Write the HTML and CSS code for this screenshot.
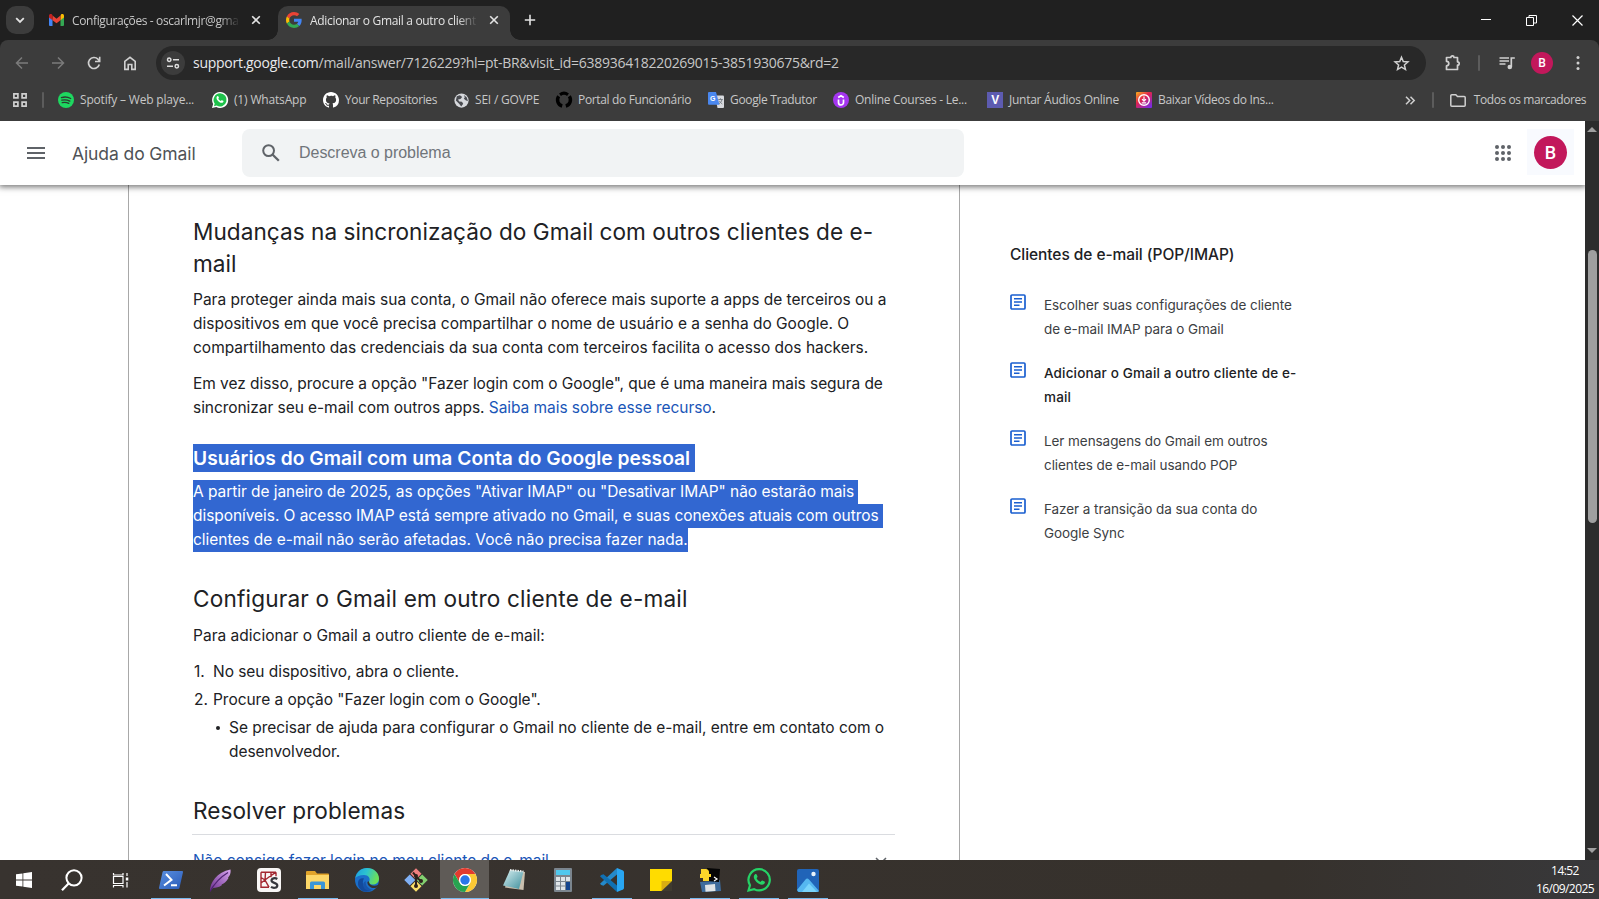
FILE: index.html
```html
<!DOCTYPE html>
<html lang="pt-BR">
<head>
<meta charset="utf-8">
<title>Adicionar o Gmail a outro cliente de e-mail</title>
<link rel="stylesheet" href="styles.css">
</head>
<body>
<svg width="0" height="0" class="defs">
  <defs>
    <symbol id="doc" viewBox="0 0 16 16"><rect x="1" y="1" width="14" height="14" rx="1" fill="none" stroke="#1a5fd0" stroke-width="1.7"/><path d="M4 4.8h8M4 8h8M4 11.200h5.500" stroke="#1a5fd0" stroke-width="1.500"/></symbol>
    <symbol id="x" viewBox="0 0 10 10"><path d="M1.200 1.200l7.600 7.600M8.800 1.200L1.200 8.800" stroke="#e3e3e3" stroke-width="1.600"/></symbol>
    <linearGradient id="edge" x1="0" y1="0" x2="1" y2="0.300"><stop offset="0" stop-color="#1c9de0"/><stop offset="0.500" stop-color="#2cc3d0"/><stop offset="1" stop-color="#6be05a"/></linearGradient>
    <linearGradient id="insta" x1="0" y1="0" x2="0.800" y2="1"><stop offset="0" stop-color="#fbb41a"/><stop offset="0.450" stop-color="#e0234e"/><stop offset="1" stop-color="#7b2be0"/></linearGradient>
    <linearGradient id="feather" x1="0" y1="1" x2="1" y2="0"><stop offset="0" stop-color="#6a2e8c"/><stop offset="1" stop-color="#d9a6f0"/></linearGradient>
    <linearGradient id="note" x1="0" y1="0" x2="1" y2="1"><stop offset="0" stop-color="#d8f0f2"/><stop offset="1" stop-color="#3f8f9c"/></linearGradient>
    <linearGradient id="ps" x1="0" y1="0" x2="1" y2="1"><stop offset="0" stop-color="#5a8fe0"/><stop offset="1" stop-color="#2a5bb8"/></linearGradient>
  </defs>
</svg>

<header class="tabstrip">
  <div class="tabsearch"><svg width="10" height="7" viewBox="0 0 10 7"><path d="M1.200 1.200L5 5l3.800-3.800" fill="none" stroke="#e3e3e3" stroke-width="1.800"/></svg></div>
  <div class="tab">
    <svg width="15" height="12" viewBox="0 0 15 12"><path d="M0 1.500V11a1 1 0 0 0 1 1h2.500V5z" fill="#4285f4"/><path d="M15 1.500V11a1 1 0 0 1-1 1h-2.500V5z" fill="#34a853"/><path d="M11.500 2v4.200L15 3.500V1.800C15 .2 13.200-.4 12 .6z" fill="#fbbc04"/><path d="M3.500 6.200V1.600l4 3.100 4-3.100v4.600l-4 3.100z" fill="#ea4335"/><path d="M0 1.800v1.700l3.500 2.700V1.600L3 .6C1.800-.4 0 .2 0 1.800z" fill="#c5221f"/></svg>
    <span class="tabtitle">Configurações - oscarlmjr@gma</span>
    <svg class="close" width="10" height="10"><use href="#x"/></svg>
  </div>
  <div class="tab active">
    <svg width="16" height="16" viewBox="0 0 48 48"><path fill="#EA4335" d="M24 9.500c3.540 0 6.710 1.220 9.210 3.600l6.850-6.850C35.900 2.380 30.470 0 24 0 14.620 0 6.510 5.380 2.560 13.220l7.980 6.190C12.430 13.720 17.740 9.500 24 9.500z"/><path fill="#4285F4" d="M46.980 24.550c0-1.570-.15-3.090-.38-4.550H24v9.020h12.940c-.58 2.960-2.260 5.480-4.780 7.180l7.730 6c4.510-4.180 7.090-10.360 7.090-17.650z"/><path fill="#FBBC05" d="M10.530 28.590c-.48-1.450-.76-2.990-.76-4.590s.27-3.140.76-4.590l-7.980-6.190C.92 16.460 0 20.120 0 24c0 3.880.92 7.540 2.560 10.780l7.970-6.190z"/><path fill="#34A853" d="M24 48c6.480 0 11.930-2.130 15.890-5.810l-7.730-6c-2.150 1.450-4.920 2.300-8.160 2.300-6.260 0-11.570-4.220-13.470-9.910l-7.980 6.190C6.510 42.620 14.620 48 24 48z"/></svg>
    <span class="tabtitle">Adicionar o Gmail a outro client</span>
    <svg class="close" width="10" height="10"><use href="#x"/></svg>
  </div>
  <svg class="newtab" width="12" height="12" viewBox="0 0 12 12"><path d="M6 .8v10.400M.8 6h10.400" stroke="#e3e3e3" stroke-width="1.600"/></svg>
  <div class="winbtns">
    <svg width="10" height="10" viewBox="0 0 10 10"><path d="M0 4.500h10" stroke="#fff"/></svg>
    <svg width="11" height="11" viewBox="0 0 11 11"><path d="M.5 2.500h7v8h-7zM3 2.500v-2h7.500v7.500H7.500" fill="none" stroke="#fff"/></svg>
    <svg width="11" height="11" viewBox="0 0 11 11"><path d="M.5.5l10 10M10.500.5l-10 10" stroke="#fff" stroke-width="1.200"/></svg>
  </div>
</header>

<div class="toolbar">
  <div class="nav">
    <svg width="16" height="16" viewBox="0 0 16 16"><path d="M14 8H3M8 2.500L2.500 8 8 13.500" fill="none" stroke="#7b7b7b" stroke-width="1.500"/></svg>
    <svg width="16" height="16" viewBox="0 0 16 16"><path d="M2 8h11M8 2.500L13.500 8 8 13.500" fill="none" stroke="#7b7b7b" stroke-width="1.500"/></svg>
    <svg width="16" height="16" viewBox="0 0 16 16"><path d="M13.300 9.500A5.500 5.500 0 1 1 12 4.200L13.200 5.600" fill="none" stroke="#d0d0d0" stroke-width="1.700"/><path d="M13.700 1.800v4.700H9" fill="none" stroke="#d0d0d0" stroke-width="1.600"/></svg>
    <svg width="16" height="16" viewBox="0 0 16 16"><path d="M2.800 6.300L8 2.300l5.200 4v8.100H9.800V9.500H6.200v4.900H2.800z" fill="none" stroke="#d0d0d0" stroke-width="1.600"/></svg>
  </div>
  <div class="omnibox">
    <span class="siteinfo"><svg width="14" height="14" viewBox="0 0 14 14" fill="none" stroke="#dedede" stroke-width="1.500"><circle cx="3.200" cy="3.700" r="1.700"/><path d="M7 3.700h6M1 10.300h6"/><circle cx="10.800" cy="10.300" r="1.700"/></svg></span>
    <span class="url"><b>support.google.com</b>/mail/answer/7126229?hl=pt-BR&amp;visit_id=638936418220269015-3851930675&amp;rd=2</span>
    <svg width="17" height="17" viewBox="0 0 24 24"><path d="M12 3.200l2.500 6.100 6.600.5-5 4.300 1.500 6.400L12 17l-5.600 3.500 1.500-6.400-5-4.300 6.600-.5z" fill="none" stroke="#d0d0d0" stroke-width="2.100"/></svg>
  </div>
  <div class="tools">
    <svg width="18" height="18" viewBox="0 0 18 18"><path d="M2.500 3.500h4.300a1.600 1.600 0 0 1 3.200 0h3.500v4.300a1.700 1.700 0 0 1 0 3.400v4.300h-11v-3.600a2.200 2.200 0 0 0 0-4.600z" fill="none" stroke="#d0d0d0" stroke-width="1.700" stroke-linejoin="round"/></svg>
    <i class="sep"></i>
    <svg class="music" width="16" height="14" viewBox="0 0 16 14"><path d="M.5 2h9.500M.5 5h9.500M.5 8h6" stroke="#d0d0d0" stroke-width="1.500"/><path d="M12.300 11V2h3.500" fill="none" stroke="#d0d0d0" stroke-width="1.700"/><circle cx="10.800" cy="11" r="2.300" fill="#d0d0d0"/></svg>
    <span class="avatar small">B</span>
    <svg class="kebab" width="4" height="16" viewBox="0 0 4 16" fill="#d0d0d0"><circle cx="2" cy="2.500" r="1.500"/><circle cx="2" cy="8" r="1.500"/><circle cx="2" cy="13.500" r="1.500"/></svg>
  </div>
</div>

<div class="bookmarks">
  <svg class="grid" width="14" height="14" viewBox="0 0 14 14" fill="none" stroke="#d0d0d0" stroke-width="1.700"><path d="M.9.900h4v4h-4zM9.100.9h4v4h-4zM.9 9.100h4v4h-4zM9.100 9.100h4v4h-4z"/></svg>
  <i class="sep"></i>
  <div class="bm b1"><svg width="16" height="16" viewBox="0 0 16 16"><circle cx="8" cy="8" r="8" fill="#1ed760"/><path d="M3.400 5.600c3-.9 6.600-.6 9.300.9M3.800 8.200c2.700-.7 5.600-.4 8 .9M4.200 10.600c2.300-.5 4.700-.3 6.600.8" fill="none" stroke="#2c3a30" stroke-width="1.300" stroke-linecap="round"/></svg>Spotify – Web playe...</div>
  <div class="bm b2"><svg width="16" height="16" viewBox="0 0 16 16"><path d="M8 0a8 8 0 1 1-3.700 15L0 16l1.100-4.100A8 8 0 0 1 8 0z" fill="#fff"/><path d="M8 1.300a6.600 6.600 0 1 1-3.300 12.300L2 14.200l.7-2.600A6.600 6.600 0 0 1 8 1.300z" fill="#1fc14b"/><path d="M5.300 4.300c.6-.4 1-.2 1.200.4l.4 1c.1.400-.5.800-.6 1.100.5 1 1.400 1.800 2.400 2.200.4-.2.800-1 1.200-.8l1.300.6c.5.300.3 1-.1 1.400-.9.900-2.300.7-3.500 0a7.500 7.500 0 0 1-2.700-2.800c-.6-1.200-.5-2.400.4-3.100z" fill="#fff"/></svg>(1) WhatsApp</div>
  <div class="bm b3"><svg width="16" height="16" viewBox="0 0 16 16"><path fill="#fff" d="M8 0C3.580 0 0 3.580 0 8c0 3.540 2.290 6.530 5.470 7.590.4.070.55-.17.55-.38 0-.19-.01-.82-.01-1.490-2.010.37-2.530-.49-2.690-.94-.09-.23-.48-.94-.82-1.130-.28-.15-.68-.52-.01-.53.63-.01 1.080.58 1.230.82.720 1.210 1.870.87 2.330.66.070-.52.280-.87.510-1.070-1.780-.2-3.640-.89-3.640-3.950 0-.87.310-1.590.82-2.150-.08-.2-.36-1.020.08-2.120 0 0 .67-.21 2.200.82A7.600 7.600 0 0 1 8 3.870c.68 0 1.360.09 2 .27 1.530-1.040 2.200-.82 2.200-.82.440 1.100.16 1.920.08 2.120.51.560.82 1.270.82 2.150 0 3.070-1.870 3.750-3.650 3.950.29.250.54.730.54 1.480 0 1.070-.01 1.930-.01 2.200 0 .21.150.46.550.38A8 8 0 0 0 16 8c0-4.420-3.580-8-8-8z"/></svg>Your Repositories</div>
  <div class="bm b4"><svg width="15" height="15" viewBox="0 0 16 16"><circle cx="8" cy="8" r="7.600" fill="#d6d8dc"/><path d="M3 3.500l3.300-1 2.400 1.800-1.800 2-2.600.6L5.500 9l3 .4 1.300 2-2.100 3-2-2.600L2 8zM10.500 2l3 2.600 1.400 3.800-2.100-.4-2.300-2 1-1.400z" fill="#494b50"/></svg>SEI / GOVPE</div>
  <div class="bm b5"><svg width="16" height="16" viewBox="0 0 16 16"><g fill="none" stroke="#000" stroke-width="3.400"><path d="M2.700 4.300A6.300 6.300 0 0 0 6.200 14M13.300 4.300A6.300 6.300 0 0 1 9.800 14"/><path d="M4 2.700a6.500 6.500 0 0 1 8 0" stroke-width="3"/></g></svg>Portal do Funcionário</div>
  <div class="bm b6"><svg width="16" height="16" viewBox="0 0 16 16"><path d="M7 3.500h8a1 1 0 0 1 1 1V15a1 1 0 0 1-1 1H9.500z" fill="#d8dade"/><path d="M1 0h7l3.500 12.800H1a1 1 0 0 1-1-1V1a1 1 0 0 1 1-1z" fill="#4a87ee"/><path d="M10.300 7.500h4.500M12.500 6.300v1.200M14 7.700c-.6 2-1.600 3-3 4M11.300 9.300l3 2.700" stroke="#7a8087" fill="none"/><text x="2" y="9.300" class="g">G</text></svg>Google Tradutor</div>
  <div class="bm b7"><svg width="16" height="16" viewBox="0 0 16 16"><circle cx="8" cy="8" r="8" fill="#a435f0"/><path d="M5.500 7.500v3a2.500 2.500 0 0 0 5 0v-3M5.200 5.500L8 3.800l2.800 1.700" fill="none" stroke="#fff" stroke-width="1.700"/></svg>Online Courses - Le...</div>
  <div class="bm b8"><span class="vico">V</span>Juntar Áudios Online</div>
  <div class="bm b9"><svg width="16" height="16" viewBox="0 0 16 16"><rect width="16" height="16" rx="1" fill="url(#insta)"/><circle cx="8" cy="8" r="5.300" fill="none" stroke="#fff" stroke-width="1.400"/><path d="M8 4.500v4.300M6 7.200l2 2 2-2M5.800 10.800h4.400" fill="none" stroke="#fff" stroke-width="1.200"/></svg>Baixar Vídeos do Ins...</div>
  <svg class="more" width="10" height="9" viewBox="0 0 10 9"><path d="M1 .8l3.700 3.700L1 8.200M5.500.8l3.700 3.700-3.700 3.700" fill="none" stroke="#d0d0d0" stroke-width="1.500"/></svg>
  <i class="sep"></i>
  <div class="bm all"><svg width="16" height="13" viewBox="0 0 16 13"><path d="M.8 1.800a1 1 0 0 1 1-1h4l1.700 1.800h6.700a1 1 0 0 1 1 1v7.600a1 1 0 0 1-1 1H1.800a1 1 0 0 1-1-1z" fill="none" stroke="#d0d0d0" stroke-width="1.500"/></svg>Todos os marcadores</div>
</div>

<div class="viewport">
  <div class="page">
    <div class="helpbar">
      <svg width="18" height="12" viewBox="0 0 18 12"><path d="M0 1h18M0 6h18M0 11h18" stroke="#5f6368" stroke-width="2"/></svg>
      <span class="product">Ajuda do Gmail</span>
      <div class="search">
        <svg width="18" height="18" viewBox="0 0 18 18" fill="none" stroke="#5f6368"><circle cx="6.600" cy="6.600" r="5.400" stroke-width="2"/><path d="M10.500 10.500l6.300 6.300" stroke-width="2.300"/></svg>
        <span>Descreva o problema</span>
      </div>
      <svg class="apps" width="16" height="16" viewBox="0 0 16 16" fill="#5f6368"><circle cx="2" cy="2" r="2"/><circle cx="8" cy="2" r="2"/><circle cx="14" cy="2" r="2"/><circle cx="2" cy="8" r="2"/><circle cx="8" cy="8" r="2"/><circle cx="14" cy="8" r="2"/><circle cx="2" cy="14" r="2"/><circle cx="8" cy="14" r="2"/><circle cx="14" cy="14" r="2"/></svg>
      <div class="account"><span class="avatar">B</span></div>
    </div>
    <div class="content">
      <article>
        <h2>Mudanças na sincronização do Gmail com outros clientes de e-<br>mail</h2>
        <p>Para proteger ainda mais sua conta, o Gmail não oferece mais suporte a apps de terceiros ou a<br>dispositivos em que você precisa compartilhar o nome de usuário e a senha do Google. O<br>compartilhamento das credenciais da sua conta com terceiros facilita o acesso dos hackers.</p>
        <p class="tight">Em vez disso, procure a opção "Fazer login com o Google", que é uma maneira mais segura de<br>sincronizar seu e-mail com outros apps. <a>Saiba mais sobre esse recurso</a>.</p>
        <h3><span class="sel">Usuários do Gmail com uma Conta do Google pessoal</span></h3>
        <p class="tight selected"><span class="sel">A partir de janeiro de 2025, as opções "Ativar IMAP" ou "Desativar IMAP" não estarão mais</span><span class="sel">disponíveis. O acesso IMAP está sempre ativado no Gmail, e suas conexões atuais com outros</span><span class="sel last">clientes de e-mail não serão afetadas. Você não precisa fazer nada.</span></p>
        <h2 class="next">Configurar o Gmail em outro cliente de e-mail</h2>
        <p>Para adicionar o Gmail a outro cliente de e-mail:</p>
        <div class="steps">
          <div class="step"><span>1.</span>No seu dispositivo, abra o cliente.</div>
          <div class="step"><span>2.</span>Procure a opção "Fazer login com o Google".</div>
          <div class="sub"><i></i><div>Se precisar de ajuda para configurar o Gmail no cliente de e-mail, entre em contato com o<br>desenvolvedor.</div></div>
        </div>
        <h2 class="trouble">Resolver problemas</h2>
        <div class="faq"><a>Não consigo fazer login no meu cliente de e-mail</a><svg width="12" height="8" viewBox="0 0 12 8"><path d="M1 1l5 5 5-5" fill="none" stroke="#5f6368" stroke-width="1.500"/></svg></div>
      </article>
      <aside>
        <h4>Clientes de e-mail (POP/IMAP)</h4>
        <div class="rel"><svg width="16" height="16"><use href="#doc"/></svg><span>Escolher suas configurações de cliente<br>de e-mail IMAP para o Gmail</span></div>
        <div class="rel current"><svg width="16" height="16"><use href="#doc"/></svg><span>Adicionar o Gmail a outro cliente de e-<br>mail</span></div>
        <div class="rel"><svg width="16" height="16"><use href="#doc"/></svg><span>Ler mensagens do Gmail em outros<br>clientes de e-mail usando POP</span></div>
        <div class="rel"><svg width="16" height="16"><use href="#doc"/></svg><span>Fazer a transição da sua conta do<br>Google Sync</span></div>
      </aside>
    </div>
  </div>
  <div class="scrollbar"><i class="up"></i><i class="thumb"></i><i class="down"></i></div>
</div>

<footer class="taskbar">
  <div class="slot n"><svg width="16" height="16" viewBox="0 0 16 16" fill="#fff"><path d="M0 2.300l6.500-.9v6.200H0zM7.300 1.300L16 0v7.600H7.300zM0 8.400h6.500v6.200L0 13.700zM7.300 8.400H16V16l-8.700-1.300z"/></svg></div>
  <div class="slot n"><svg width="22" height="22" viewBox="0 0 22 22" fill="none" stroke="#fff"><circle cx="13" cy="8.800" r="7.600" stroke-width="2"/><path d="M7.600 14.500L1 21.300" stroke-width="2.200"/></svg></div>
  <div class="slot n"><svg width="17" height="16" viewBox="0 0 17 16" fill="none" stroke="#fff" stroke-width="1.200"><path d="M1.500 4.500h9.500v7H1.500zM1.500 1v2h9.500V1M1.500 15.500v-2h9.500v2M15 1v3M15 10v5.500"/><path d="M13.800 5.500h2.500v3h-2.500z" fill="#fff" stroke="none"/></svg></div>
  <div class="slot run"><svg width="24" height="18" viewBox="0 0 24 18"><path d="M5 0h18a1 1 0 0 1 1 1.200l-3.500 15.500a1.600 1.600 0 0 1-1.500 1.300H1a1 1 0 0 1-1-1.200L3.500 1.300A1.600 1.600 0 0 1 5 0z" fill="url(#ps)"/><path d="M7 3l5.500 5.800L5 14.500M12 14.300h6" fill="none" stroke="#fff" stroke-width="2"/></svg></div>
  <div class="slot"><svg width="22" height="23" viewBox="0 0 22 23"><path d="M1 22.500C.5 14 8 3 21.500.5c.5 4.500-1 6.500-2.500 8l.5.500c-2 4-5 5.500-7 6.500l.5.500c-3 2.500-6 2.500-9 3z" fill="url(#feather)"/><path d="M1 22.500C5 15 10 9 19 3.500" fill="none" stroke="#4f2272" stroke-width="1.200"/></svg></div>
  <div class="slot"><svg width="24" height="24" viewBox="0 0 24 24"><rect width="24" height="24" rx="4" fill="#f8f6f5"/><path d="M4 4.200h15M4 4.200v15h8M8.500 4.200l-.5 8 4 7M4 9.500l4 2.500 4-3 7-4.800M4 15l4-3M14 4.200v5M19 4.200v4" fill="none" stroke="#a32730" stroke-width="1.400"/><path d="M20.300 11c-2.300-1.500-5.800-.8-5.800 1.600 0 3 5.800 1.500 5.800 4.900 0 2.500-3.900 3-6.300 1.400" fill="none" stroke="#36363c" stroke-width="2.200"/></svg></div>
  <div class="slot run"><svg width="23" height="19" viewBox="0 0 23 19"><path d="M1 0h8l2 2.500h11a1 1 0 0 1 1 1V17H0V1a1 1 0 0 1 1-1z" fill="#e0a32a"/><path d="M0 4h23v14H0z" fill="#fcd768"/><path d="M4 18v-6a1.500 1.500 0 0 1 1.500-1.500h12A1.500 1.500 0 0 1 19 12v6h-4v-4H8v4z" fill="#3a96d8"/></svg></div>
  <div class="slot"><svg width="24" height="24" viewBox="0 0 24 24"><circle cx="12" cy="12" r="12" fill="#1b6fc9"/><path d="M.3 10C1.500 4 6 0 12 0c7 0 12 5 12 10.500 0 4-3 6-6.500 6-3 0-4-1.200-3.500-2.500 2-3.500-.5-7-5-7C4.500 7 1.500 8.500.3 10z" fill="url(#edge)"/><path d="M9 10.500c-3 4.500 0 11.500 7 12-7 3.500-13.500-1-13-8 .2-3 3-5 6-4z" fill="#124a9c"/><path d="M14 14c1 4 6 5 9.500 2.500-.5 1.300-1.300 2.300-2.200 3.200-4.300 1.200-8.300-1.200-8.900-4.700-.2-1.700 1.600-2.500 1.600-1z" fill="#37322e"/><path d="M10.800 13c-.8 4.500 3 8.600 7.500 8.600-3 2-8 1.300-9.800-2.600-1-2.500-.2-5 2.300-6z" fill="#1755ab"/></svg></div>
  <div class="slot"><svg width="24" height="24" viewBox="0 0 24 24"><g transform="rotate(45 12 12)"><rect x="3.700" y="3.700" width="7.800" height="7.800" fill="#f08080"/><rect x="12.500" y="3.700" width="7.800" height="7.800" fill="#82d070"/><rect x="3.700" y="12.500" width="7.800" height="7.800" fill="#80b0f5"/><rect x="12.500" y="12.500" width="7.800" height="7.800" fill="#fbe069"/></g><path d="M9 4.500L12 8v10M12 9l5 4" fill="none" stroke="#2d211c" stroke-width="2"/><circle cx="12" cy="8" r="2" fill="#2d211c"/><circle cx="12" cy="18" r="2" fill="#2d211c"/><circle cx="17" cy="13" r="2" fill="#2d211c"/></svg></div>
  <div class="slot run focus"><svg width="24" height="24" viewBox="0 0 24 24"><circle cx="12" cy="12" r="12" fill="#fff"/><path d="M1.600 6A12 12 0 0 1 22.400 6H12a6 6 0 0 0-5.200 9z" fill="#e33b2e"/><path d="M22.400 6A12 12 0 0 1 12 24l5.200-9A6 6 0 0 0 12 6z" fill="#fcc934"/><path d="M1.600 6A12 12 0 0 0 12 24l5.200-9a6 6 0 0 1-10.400 0z" fill="#27a350"/><circle cx="12" cy="12" r="5.900" fill="#fff"/><circle cx="12" cy="12" r="4.700" fill="#2b76e8"/></svg></div>
  <div class="slot"><svg width="24" height="22" viewBox="0 0 24 22"><path d="M8 1l15 2-1.500 18L3 18.500z" fill="#c9bfae"/><path d="M8 1l13.500 1.500L17 20 1 16.500z" fill="url(#note)"/><path d="M8 1l13.500 1.500" stroke="#e9eeee" stroke-width="2" stroke-dasharray="1.500 1"/></svg></div>
  <div class="slot"><svg width="18" height="24" viewBox="0 0 18 24"><rect width="18" height="24" rx="1" fill="#7b858e"/><rect x="2" y="2" width="14" height="5" fill="#50c8ee"/><g fill="#dfe5e9"><path d="M2 9h4v4H2zM7 9h4v4H7zM12 9h4v4h-4zM2 14h4v3.500H2zM7 14h4v3.500H7zM2 18.500h4V22H2zM7 18.500h4V22H7z"/></g><path d="M12 14h4v8h-4z" fill="#14468f"/></svg></div>
  <div class="slot run"><svg width="24" height="24" viewBox="0 0 24 24"><path d="M17 0v6.500L3.500 17.800 1.200 16.900 0 15.700z" fill="#2489ca"/><path d="M0 8.300L1.200 7.100l2.300-.9L17 17.500V24z" fill="#1070b3"/><path d="M17 0l6 2.500a2 2 0 0 1 1 1.600v15.800a2 2 0 0 1-1 1.600L17 24z" fill="#29a6f2"/></svg></div>
  <div class="slot"><svg width="22" height="22" viewBox="0 0 22 22"><path d="M0 0h22v22H0z" fill="#ffdc00"/><path d="M11.500 22V12H22z" fill="#d9ae12"/><path d="M11.500 22L22 12v10z" fill="#3f3b30"/></svg></div>
  <div class="slot run"><svg width="22" height="24" viewBox="0 0 22 24"><path d="M1 14l20-2 1 11-19 1z" fill="#3e6c9d"/><path d="M6 17l10-1 .5 7-10 .7z" fill="#dfe4e7"/><path d="M8 0l13 1-1 13-13-1z" fill="#050505"/><path d="M15 9l3 2-3 2" fill="none" stroke="#fff" stroke-width="1.200"/><path d="M2 1h5a3 3 0 0 1 3 2.500V6h2v3h-2v4H4v-3H1V6h1z" fill="#fbd62a"/></svg></div>
  <div class="slot run"><svg width="24" height="24" viewBox="0 0 24 24"><path d="M12.300 1.200a10.600 10.600 0 1 1-5.200 19.900L1.500 22.500 3 17.200a10.600 10.600 0 0 1 9.300-16z" fill="none" stroke="#25d366" stroke-width="2.200"/><path d="M8 6.300c.8-.5 1.500-.3 1.800.5l.7 1.700c.2.600-.8 1.300-.9 1.700.8 1.600 2.200 3 3.900 3.700.5-.3 1.300-1.700 1.900-1.400l2.100 1c.8.500.4 1.700-.2 2.300-1.500 1.500-3.600 1-5.500 0a12 12 0 0 1-4.400-4.600C6.400 9.200 6.600 7.400 8 6.300z" fill="#25d366"/></svg></div>
  <div class="slot run"><svg width="22" height="23" viewBox="0 0 22 23"><rect width="22" height="23" rx="2" fill="#2064b8"/><path d="M0 21L8.500 10.500a2.300 2.300 0 0 1 3.500 0L22 22a2 2 0 0 1-1.500 1H1.500z" fill="#55b7f0"/><path d="M5 23l7-8.500L20 23z" fill="#79d4fb"/><circle cx="16.500" cy="5" r="2.200" fill="#e8f3fb"/></svg></div>
  <div class="clock"><span>14:52</span><span>16/09/2025</span></div>
</footer>
</body>
</html>
```
FILE: styles.css
```css
* { box-sizing: border-box; }
html, body { margin: 0; height: 899px; overflow: hidden; }
body {
  display: flex; flex-direction: column; width: 1599px;
  font-family: Inter, "Liberation Sans", sans-serif; background: #1f1f1f;
}
svg { display: block; flex: none; overflow: visible; }
i { display: block; flex: none; }
.defs { position: absolute; }

/* tab strip */
.tabstrip {
  height: 40px; flex: none; display: flex; align-items: flex-start; padding: 6px 0 0 6px;
  background: #202020; color: #e3e3e3; font: 12px/28px "Open Sans", sans-serif;
}
.tabsearch {
  width: 28px; height: 28px; border-radius: 10px; background: #3c3c3c;
  display: flex; align-items: center; justify-content: center;
}
.tab { display: flex; align-items: center; height: 28px; width: 244px; padding-left: 15px; color: #c7c7c7; }
.tab .tabtitle {
  margin-left: 8px; padding-top: 1px; width: 168px; white-space: nowrap; letter-spacing: -0.380px;
  -webkit-mask-image: linear-gradient(90deg, #000 88%, transparent);
  mask-image: linear-gradient(90deg, #000 88%, transparent);
}
.tab .close { margin-left: 11px; }
.tab.active {
  width: 232px; height: 34px; padding: 0 0 6px 8px; background: #3c3c3c;
  border-radius: 10px 10px 0 0; color: #e3e3e3; position: relative;
}
.tab.active::before, .tab.active::after {
  content: ""; position: absolute; bottom: 0; width: 10px; height: 10px;
}
.tab.active::before { left: -10px; background: radial-gradient(circle at 0 0, transparent 9.500px, #3c3c3c 10px); }
.tab.active::after { right: -10px; background: radial-gradient(circle at 100% 0, transparent 9.500px, #3c3c3c 10px); }
.tab.active .tabtitle { letter-spacing: -0.320px; }
.newtab { margin: 8px 0 0 14px; }
.winbtns { margin-left: auto; display: flex; align-items: center; height: 28px; gap: 35px; padding-right: 16px; }

/* toolbar */
.toolbar {
  height: 46px; flex: none; display: flex; align-items: center; padding-left: 14px;
  background: #3c3c3c; border-radius: 8px 8px 0 0;
}
.nav { display: flex; gap: 20px; width: 142px; }
.omnibox {
  width: 1270px; height: 34px; border-radius: 17px; background: #282828;
  display: flex; align-items: center; padding: 0 16px 0 5px;
}
.siteinfo {
  width: 24px; height: 24px; border-radius: 50%; background: #3c3c3c;
  display: flex; align-items: center; justify-content: center;
}
.url {
  flex: 1; margin-left: 8px; color: #c7c7c7; white-space: nowrap;
  font: 14px/20px "Open Sans", sans-serif; letter-spacing: -0.270px;
}
.url b { font-weight: 400; color: #e8eaed; }
.tools { display: flex; align-items: center; margin-left: 18px; }
.sep { width: 2px; height: 16px; background: #5c5c5c; border-radius: 1px; }
.tools .sep { margin-left: 16px; }
.music { margin-left: 19px; }
.kebab { margin-left: 23px; }
.avatar {
  width: 33px; height: 33px; border-radius: 50%; background: #c2185b; color: #fff;
  display: flex; align-items: center; justify-content: center; font: 500 18px Roboto, sans-serif;
}
.avatar.small { width: 22px; height: 22px; margin-left: 16px; font-size: 12px; }

/* bookmarks bar */
.bookmarks {
  height: 35px; flex: none; display: flex; align-items: center; padding: 0 13px 7px; color: #c7c7c7;
  background: #3c3c3c; font: 12px/20px "Open Sans", sans-serif; letter-spacing: -0.340px;
}
.grid + .sep { margin: 0 14px 0 15px; }
.bm { display: flex; align-items: center; gap: 6px; white-space: nowrap; flex: none; }
.b1 { width: 154px; letter-spacing: -0.190px; }
.b2 { width: 111px; letter-spacing: -0.170px; }
.b3 { width: 131px; letter-spacing: -0.390px; }
.b4 { width: 102px; letter-spacing: -0.200px; }
.b5 { width: 152px; }
.b6 { width: 125px; }
.b7 { width: 154px; letter-spacing: -0.270px; }
.b8 { width: 149px; letter-spacing: -0.260px; }
.b9 { letter-spacing: -0.290px; }
.vico {
  width: 16px; height: 16px; background: #5d5bb0; color: #fff;
  font: 700 12px/16px "Liberation Sans", sans-serif; text-align: center;
}
.g { font: 700 7px "Liberation Sans", sans-serif; fill: #fff; }
.more { margin-left: auto; }
.more + .sep { margin: 0 16px 0 17px; }
.all { letter-spacing: -0.430px; gap: 8px; }

/* web page */
.viewport { flex: 1; min-height: 0; display: flex; background: #fff; }
.page { flex: 1; min-width: 0; display: flex; flex-direction: column; overflow: hidden; }
.helpbar {
  height: 64px; flex: none; display: flex; align-items: center; padding: 0 11px 0 27px;
  background: #fff; box-shadow: 0 1px 6px 1px rgba(0, 0, 0, 0.55); position: relative;
}
.product { margin: 0 0 0 27px; width: 170px; color: #4f5256; font-size: 17.500px; letter-spacing: -0.100px; white-space: nowrap; }
.search {
  width: 722px; height: 48px; border-radius: 8px; background: #f1f3f4; color: #70757a;
  display: flex; align-items: center; gap: 19px; padding-left: 20px;
  font: 16px "Liberation Sans", sans-serif; letter-spacing: -0.030px;
}
.apps { margin-left: auto; }
.account { width: 47px; height: 46px; margin: 0 0 2px 16px; background: #f8fafe; display: flex; align-items: center; justify-content: center; }
.content { flex: 1; min-height: 0; display: flex; padding-left: 128px; color: #202124; }
article {
  width: 832px; height: 900px; border: solid #a8a8a8; border-width: 0 1px; padding: 31px 64px 0 64px;
  font-size: 15.500px; line-height: 24px; letter-spacing: -0.010px; white-space: nowrap;
}
article p { margin: 0 0 12px; }
article .tight { letter-spacing: -0.055px; }
article a { color: #1a56b8; }
h2 { margin: 0; padding-bottom: 8px; font: 400 22.600px/32px Inter, sans-serif; letter-spacing: 0.030px; }
h3 { margin: 24px 0 8px; font: 600 19.200px/28px Inter, sans-serif; letter-spacing: 0.040px; display: flex; }
.sel { background: #3267d1; color: #fff; padding-right: 4px; }
h3 .sel { padding-right: 5px; }
.sel.last { padding-right: 0; letter-spacing: -0.025px; }
.selected { display: flex; flex-direction: column; align-items: flex-start; }
.next { margin-top: 31px; padding-bottom: 9px; letter-spacing: 0.190px; }
.next + p { letter-spacing: 0.020px; }
.steps { display: flex; flex-direction: column; gap: 4px; letter-spacing: -0.040px; }
.step { display: flex; }
.step span { width: 20px; padding-left: 1px; }
.sub { display: flex; }
.sub i { width: 4px; height: 4px; border-radius: 50%; background: #202124; margin: 10px 9px 0 23px; }
.trouble { margin: 31px 0 0 -1px; padding: 0 1px 7px; border-bottom: 1px solid #dadce0; letter-spacing: 0.060px; }
.faq { display: flex; justify-content: space-between; padding: 14px 8px 0 0; letter-spacing: -0.060px; }
.faq svg { margin-top: 8px; }

aside { padding: 58px 0 0 50px; font-size: 13.500px; line-height: 24px; letter-spacing: -0.070px; color: #3c4043; white-space: nowrap; }
h4 { margin: 0 0 26px; font: 500 15.500px/24px Inter, sans-serif; letter-spacing: -0.060px; color: #202124; }
.rel { display: flex; gap: 18px; margin-bottom: 20px; }
.current { color: #202124; font-weight: 500; letter-spacing: 0.150px; }
.rel svg { margin-top: 1px; }

.scrollbar { width: 14px; display: flex; flex-direction: column; align-items: center; background: #2c2c2c; }
.up { border: 5px solid transparent; border-top: 0; border-bottom: 5px solid #9f9f9f; margin-top: 6px; }
.thumb { width: 9px; height: 273px; border-radius: 5px; background: #9f9f9f; margin-top: 118px; }
.down { border: 5px solid transparent; border-bottom: 0; border-top: 5px solid #9f9f9f; margin: auto 0 7px; }

/* taskbar */
.taskbar {
  height: 39px; flex: none; display: flex; position: relative; color: #fff;
  background: linear-gradient(90deg, #38332f, #36312c 80%, #38383a);
}
.slot { width: 49px; height: 39px; display: flex; align-items: center; justify-content: center; padding-top: 1px; }
.slot.n { width: 48px; }
.slot.n + .slot:not(.n) { margin-left: 2px; }
.run { background: linear-gradient(#76b9ed, #76b9ed) center bottom / 40px 1.500px no-repeat; }
.focus { background: linear-gradient(#76b9ed, #76b9ed) center bottom / 48px 1.500px no-repeat, #5f5b57; }
.clock {
  margin: 0 4px 0 auto; width: 60px; display: flex; flex-direction: column; align-items: center;
  font: 12px/18px "Open Sans", sans-serif; letter-spacing: -0.560px; padding-top: 2px;
}
```
